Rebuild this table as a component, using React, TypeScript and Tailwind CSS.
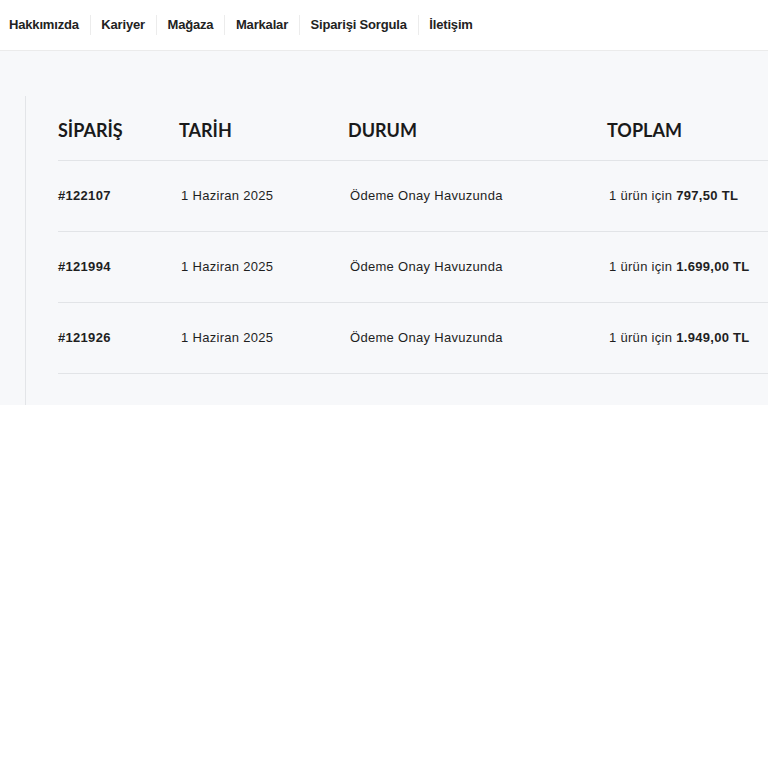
const navItems = ["Hakkımızda", "Kariyer", "Mağaza", "Markalar", "Siparişi Sorgula", "İletişim"];

const orders = [
  { id: "#122107", date: "1 Haziran 2025", status: "Ödeme Onay Havuzunda", total: "797,50 TL" },
  { id: "#121994", date: "1 Haziran 2025", status: "Ödeme Onay Havuzunda", total: "1.699,00 TL" },
  { id: "#121926", date: "1 Haziran 2025", status: "Ödeme Onay Havuzunda", total: "1.949,00 TL" },
];

export default function App() {
  return (
    <div className="min-h-screen bg-white overflow-hidden" style={{ fontFamily: '"Liberation Sans", Arial, sans-serif' }}>
      <nav className="h-[51px] border-b border-[#ebebeb] flex items-center pl-[9px]">
        {navItems.map((item, i) => (
          <div key={item} className="flex items-center">
            {i > 0 && <span className="h-[20px] w-px bg-[#ececec] mx-[10.75px]" />}
            <a className="text-[13px] font-semibold text-[#222] tracking-[-0.17px]">{item}</a>
          </div>
        ))}
      </nav>

      <section className="bg-[#f7f8fa] pt-[45px] pl-[25px]">
        <div className="border-l border-[#e3e5e8] pl-[32px] pb-[31px]">
          <div className="w-[760px]">
            <div className="flex items-center h-[65px] border-b border-[#e2e4e7] text-[18px] font-bold text-[#1a1a1a] pt-[4px]" style={{ fontFamily: 'Lato, "Liberation Sans", sans-serif' }}>
              <div className="w-[121px]">SİPARİŞ</div>
              <div className="w-[169px]">TARİH</div>
              <div className="w-[259px]">DURUM</div>
              <div>TOPLAM</div>
            </div>
            {orders.map((o) => (
              <div key={o.id} className="flex items-center h-[71px] border-b border-[#e2e4e7] text-[13px] text-[#1f1f1f] tracking-[0.3px] pb-[1px]">
                <div className="w-[121px] font-bold">{o.id}</div>
                <div className="w-[169px] pl-[2px]">{o.date}</div>
                <div className="w-[259px] pl-[2px]">{o.status}</div>
                <div className="pl-[2px]">
                  1 ürün için <span className="font-bold">{o.total}</span>
                </div>
              </div>
            ))}
          </div>
        </div>
      </section>
    </div>
  );
}
